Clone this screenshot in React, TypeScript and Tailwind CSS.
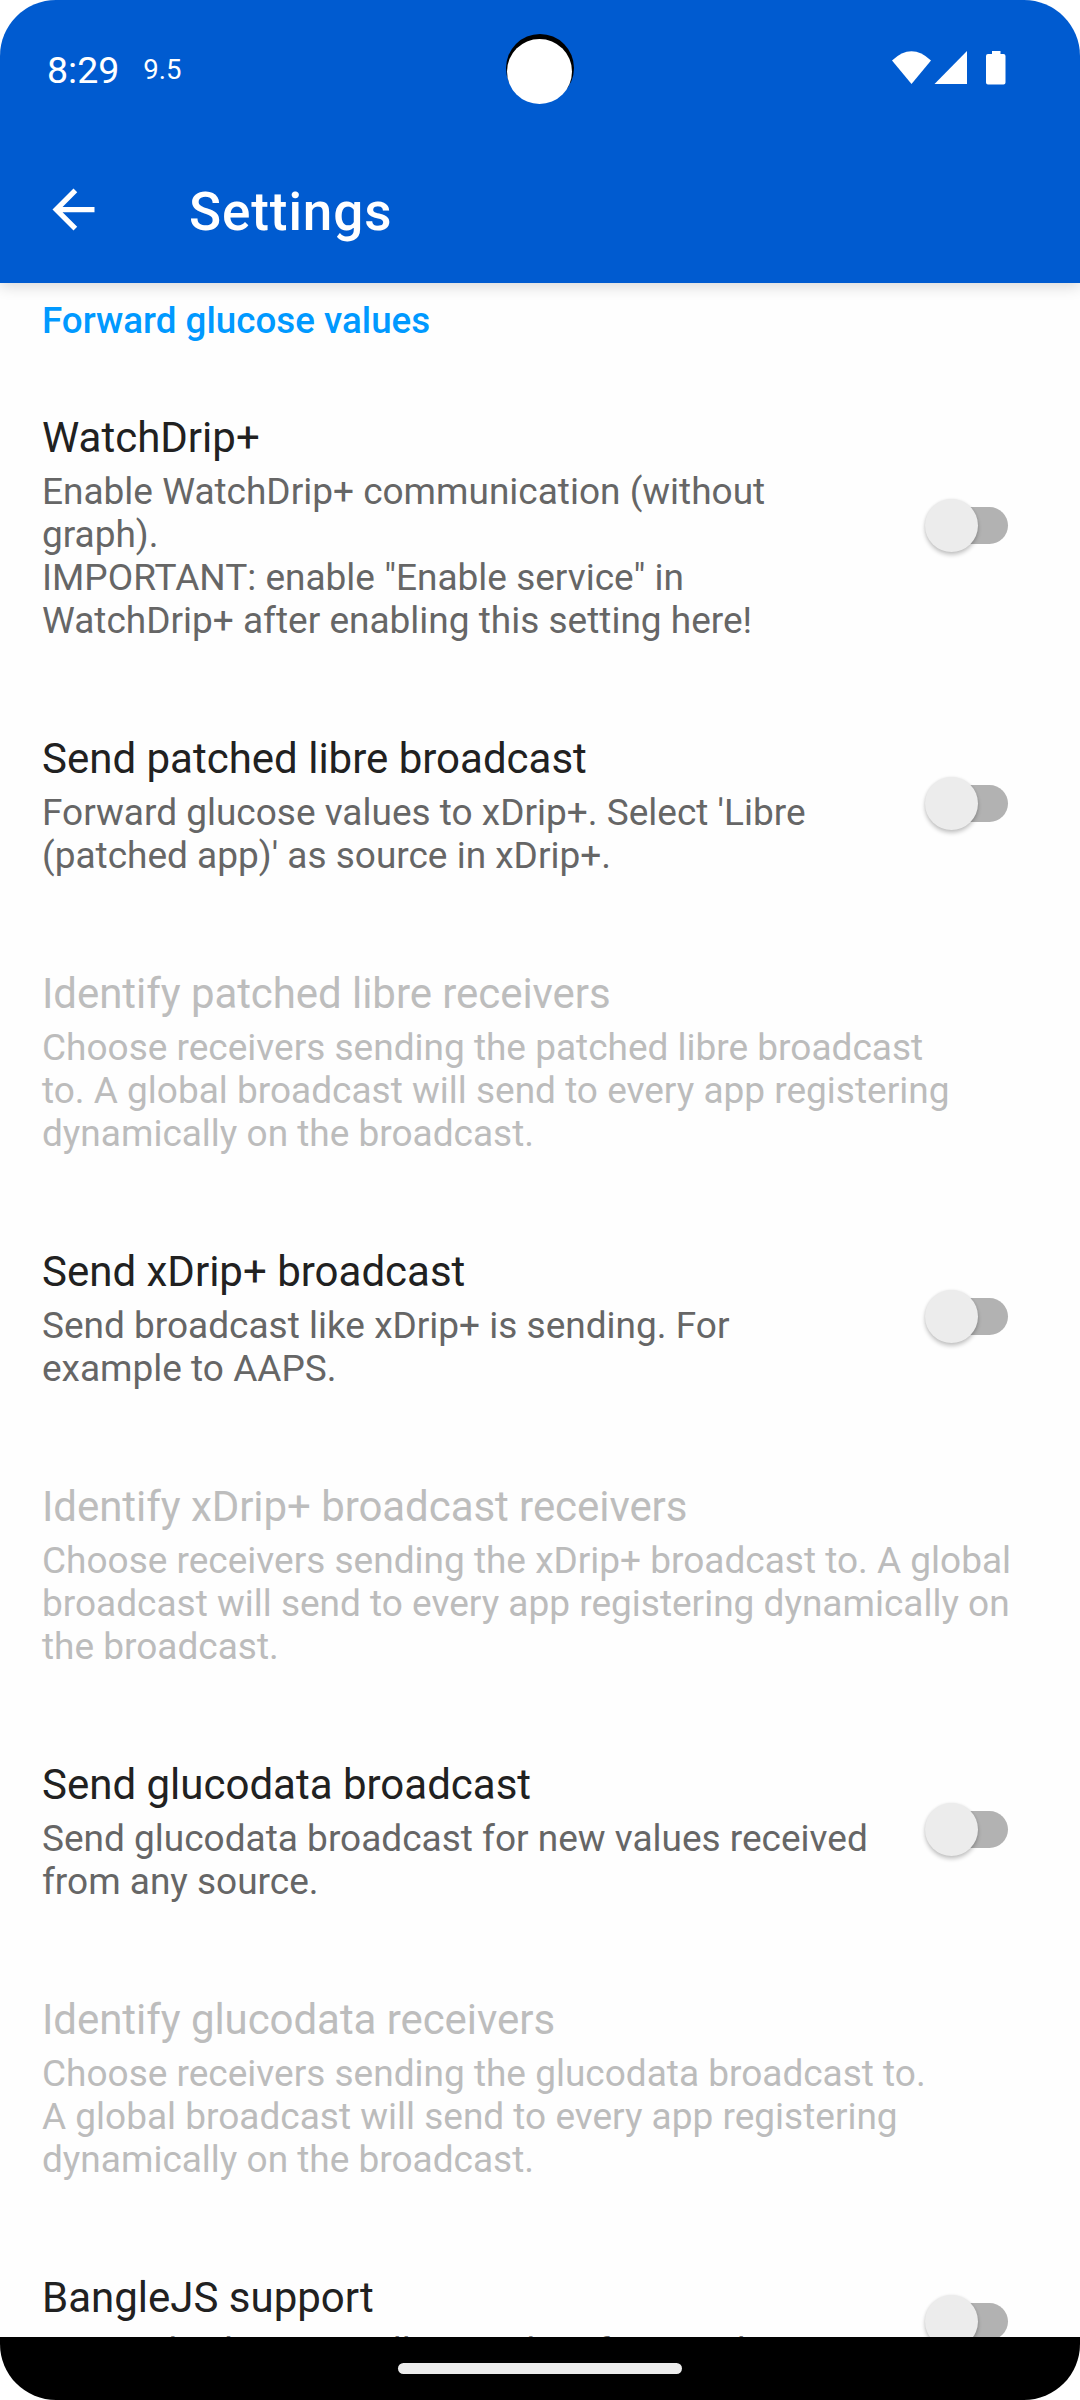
import React from "react";

type Item = { title: string; lines: string[]; toggle?: boolean; disabled?: boolean };

const items: Item[] = [
  {
    title: "WatchDrip+",
    lines: [
      "Enable WatchDrip+ communication (without",
      "graph).",
      'IMPORTANT: enable "Enable service" in',
      "WatchDrip+ after enabling this setting here!",
    ],
    toggle: true,
  },
  {
    title: "Send patched libre broadcast",
    lines: ["Forward glucose values to xDrip+. Select 'Libre", "(patched app)' as source in xDrip+."],
    toggle: true,
  },
  {
    title: "Identify patched libre receivers",
    lines: [
      "Choose receivers sending the patched libre broadcast",
      "to. A global broadcast will send to every app registering",
      "dynamically on the broadcast.",
    ],
    disabled: true,
  },
  {
    title: "Send xDrip+ broadcast",
    lines: ["Send broadcast like xDrip+ is sending. For", "example to AAPS."],
    toggle: true,
  },
  {
    title: "Identify xDrip+ broadcast receivers",
    lines: [
      "Choose receivers sending the xDrip+ broadcast to. A global",
      "broadcast will send to every app registering dynamically on",
      "the broadcast.",
    ],
    disabled: true,
  },
  {
    title: "Send glucodata broadcast",
    lines: ["Send glucodata broadcast for new values received", "from any source."],
    toggle: true,
  },
  {
    title: "Identify glucodata receivers",
    lines: [
      "Choose receivers sending the glucodata broadcast to.",
      "A global broadcast will send to every app registering",
      "dynamically on the broadcast.",
    ],
    disabled: true,
  },
  {
    title: "BangleJS support",
    lines: ["Forward values. Install BG widget for Bangle"],
    toggle: true,
  },
];

function Toggle() {
  return (
    <div className="mr-[72px] mb-[5px] shrink-0">
      <div className="relative h-[54px] w-[84px]">
        <div className="absolute top-[9px] right-0 h-[37px] w-[72px] rounded-full bg-[#b2b2b2]" />
        <div className="absolute top-[1px] left-[1px] size-[53px] rounded-full bg-[#ececec] shadow-[0_3px_4px_rgba(0,0,0,0.22),0_0_3px_rgba(0,0,0,0.08)]" />
      </div>
    </div>
  );
}

function Row({ title, lines, toggle, disabled }: Item) {
  return (
    <div className="flex shrink-0 items-center justify-between pt-[42px] pb-[37px] pl-[42px]">
      <div className="whitespace-nowrap">
        <div
          className={`text-[42px] leading-[50px] ${disabled ? "tracking-[-0.06px] text-[#bdbdbd]" : "text-[#212121]"}`}
        >
          {title}
        </div>
        <div className={`mt-[7px] text-[37px] leading-[43px] ${disabled ? "text-[#bcbcbc]" : "text-[#666666]"}`}>
          {lines.map((l) => (
            <div key={l}>{l}</div>
          ))}
        </div>
      </div>
      {toggle && <Toggle />}
    </div>
  );
}

export default function App() {
  return (
    <div className="h-[2400px] w-[1080px] bg-white">
      <div className="flex h-full flex-col overflow-hidden rounded-[56px] bg-[#fefefe] font-['Roboto',sans-serif]">
        <header className="relative z-10 h-[283px] shrink-0 bg-[#005bd0] text-white shadow-[0_3px_14px_rgba(0,0,0,0.16)]">
          <div className="flex h-[136px] items-center pr-[70px] pl-[47px]">
            <span className="pt-[5px] text-[37.5px]">8:29</span>
            <span className="ml-[24px] pt-[4px] text-[27.5px]">9.5</span>
            <svg className="ml-auto" width="118" height="36" viewBox="0 0 118 36" fill="#fff">
              <path d="M0 10.500Q19.500 -8 39 10.500L19.500 34Z" />
              <path d="M42.500 34H75V1Z" />
              <path d="M100 1h8.500v3h3q2 0 2 2v26.500q0 2-2 2H96q-2 0-2-2v-26.500Q94 4 96 4h4z" />
            </svg>
          </div>
          <div className="absolute top-[34px] left-[506px] size-[68px] rounded-full bg-black" />
          <div className="absolute top-[39px] left-[507px] size-[65px] rounded-full bg-white" />
          <div className="flex h-[147px] items-center pl-[42px]">
            <svg width="63" height="63" viewBox="0 0 24 24" fill="#fff">
              <path d="M20 11H7.830l5.590-5.590L12 4l-8 8 8 8 1.410-1.410L7.830 13H20v-2z" />
            </svg>
            <h1 className="ml-[84px] pt-[6px] text-[53px] font-medium tracking-[0.9px]">Settings</h1>
          </div>
        </header>
        <main className="flex min-h-0 flex-1 flex-col overflow-hidden">
          <div className="h-[88px] shrink-0 pt-[16px] pl-[42px] text-[36.75px] leading-[43px] font-medium text-[#0099ff]">
            Forward glucose values
          </div>
          <div className="flex flex-col gap-[13px]">
            {items.map((i) => (
              <Row key={i.title} {...i} />
            ))}
          </div>
        </main>
        <footer className="relative z-10 flex h-[63px] shrink-0 justify-center bg-black pt-[26px]">
          <div className="h-[11px] w-[284px] rounded-full bg-[#ececec]" />
        </footer>
      </div>
    </div>
  );
}
